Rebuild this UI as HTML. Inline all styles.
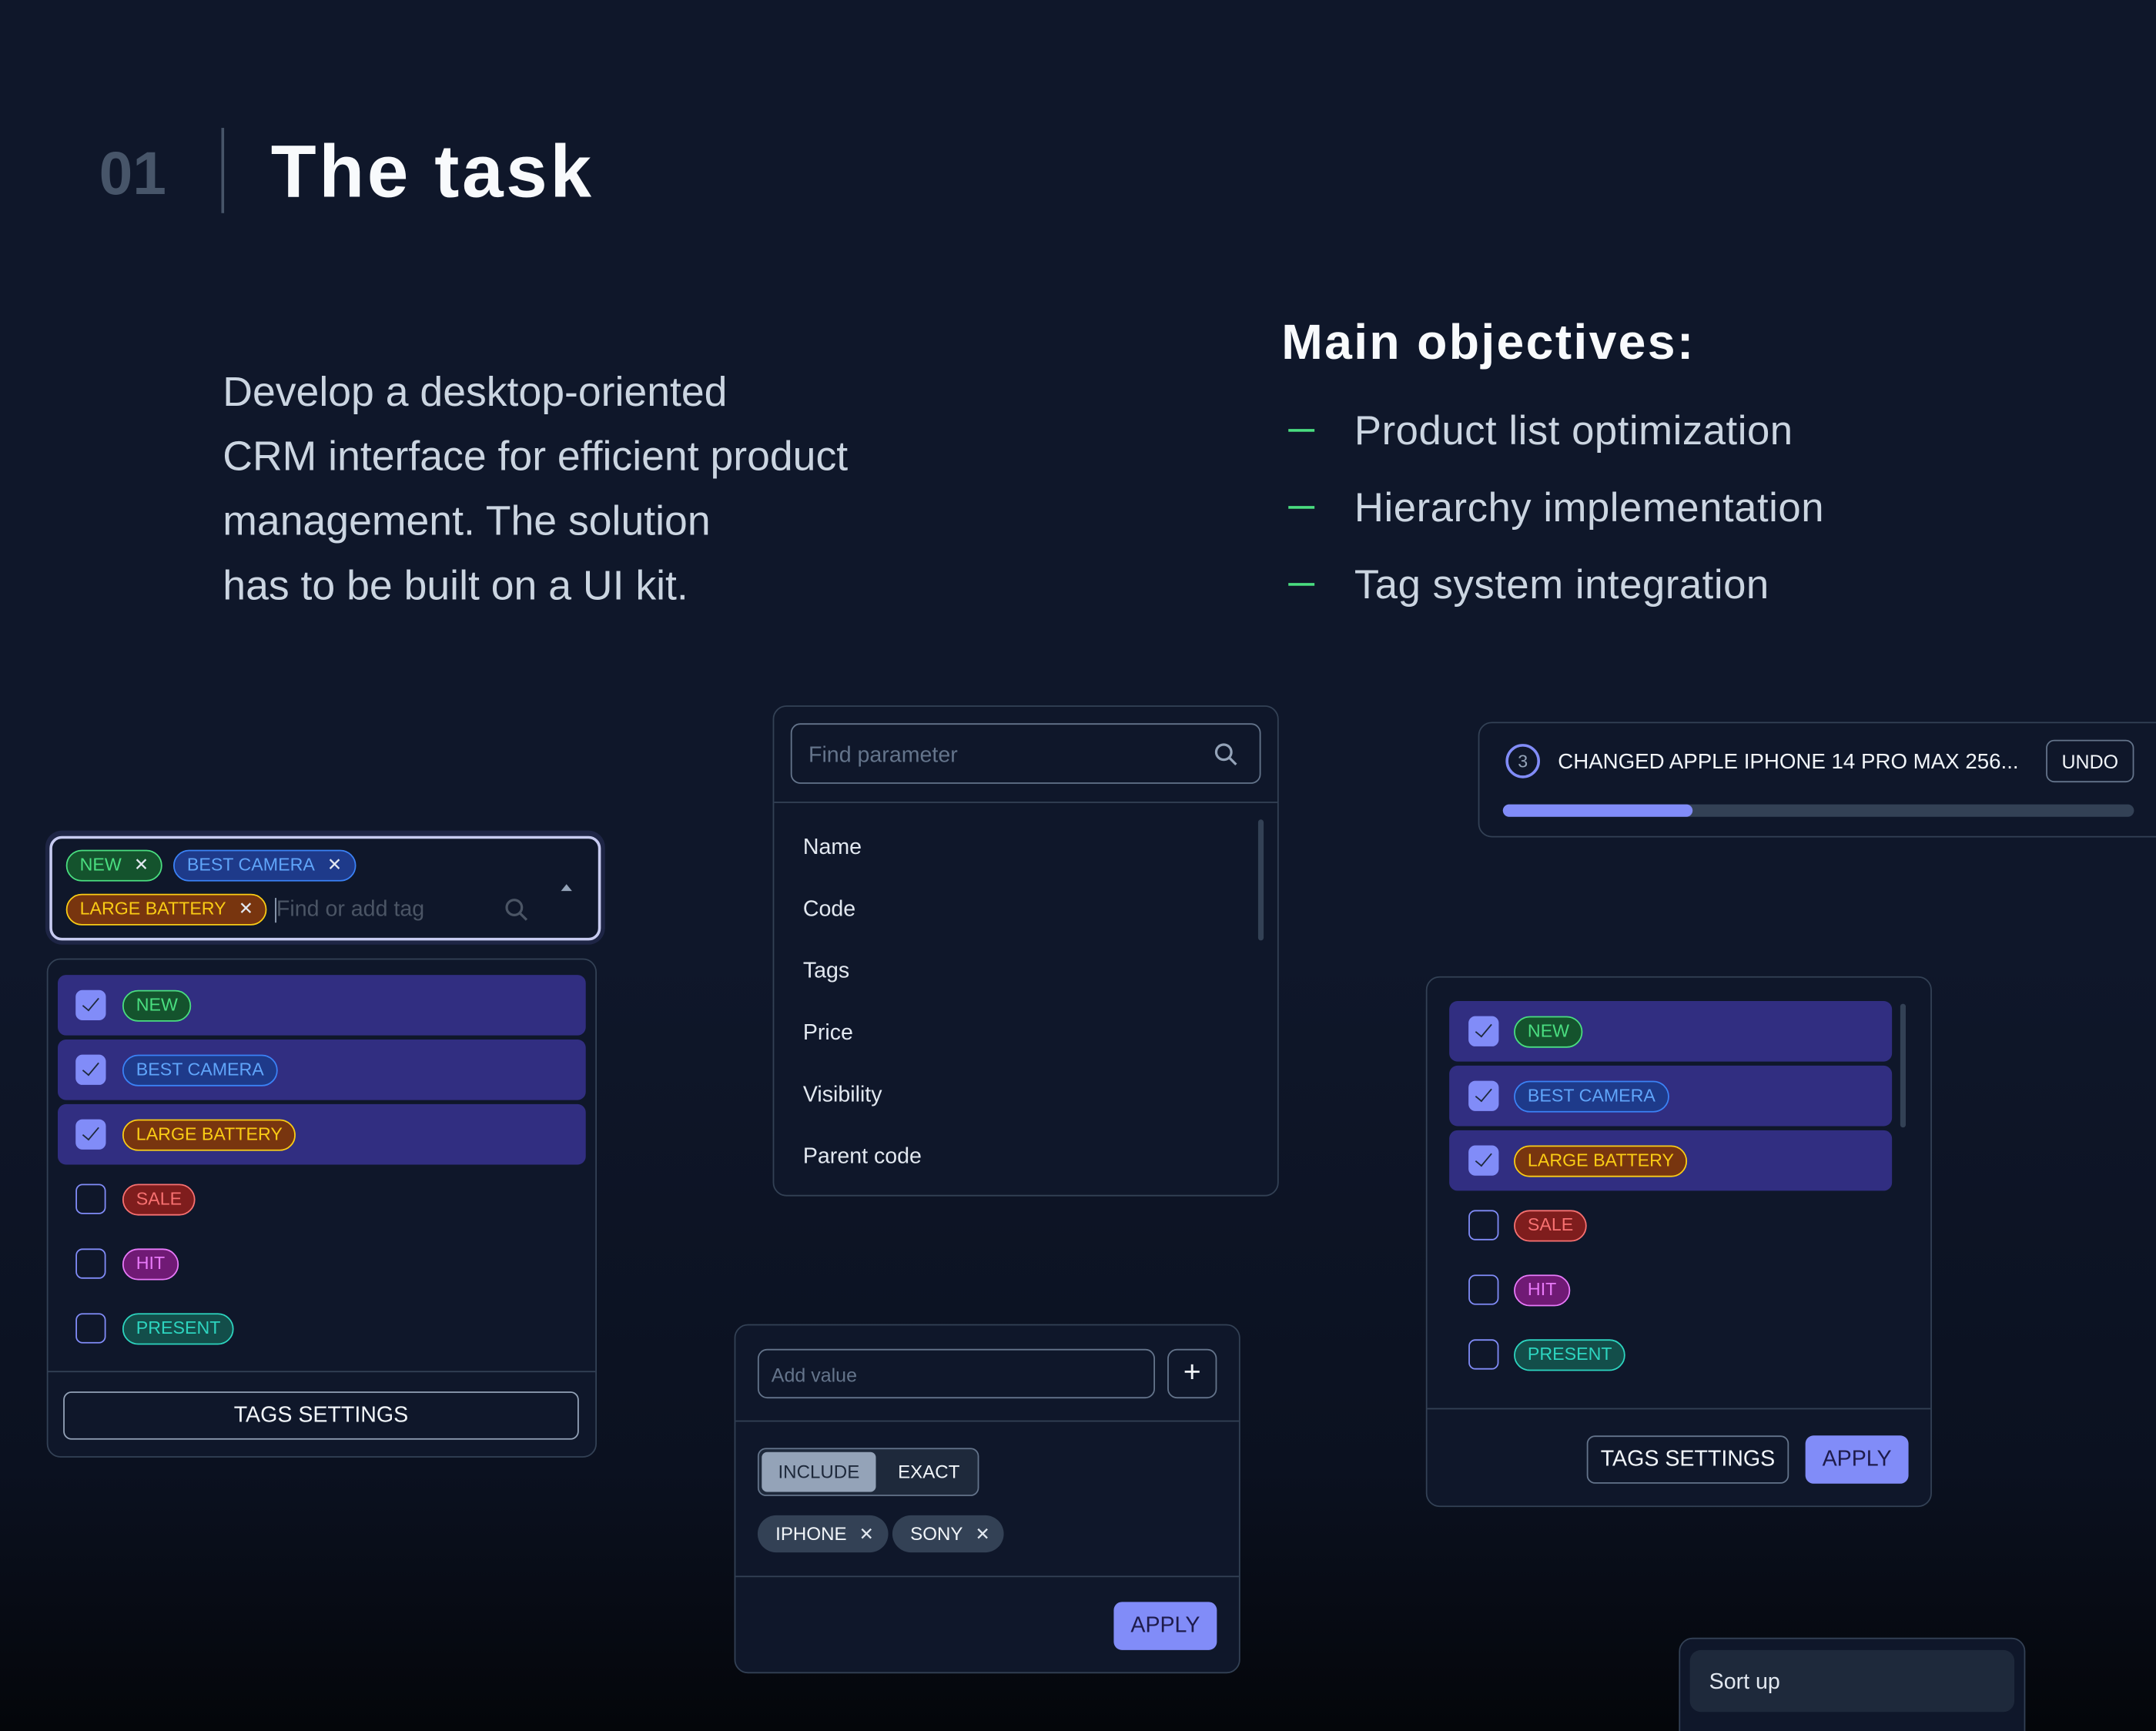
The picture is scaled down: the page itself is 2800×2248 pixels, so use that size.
<!DOCTYPE html>
<html><head><meta charset="utf-8">
<style>
*{margin:0;padding:0;box-sizing:border-box}
html{width:2800px;height:2248px;overflow:hidden;background:linear-gradient(180deg,#0f172a 0%,#0f172a 55%,#0b1120 85%,#04060a 100%)}
body{width:2800px;height:2248px;overflow:hidden;position:relative}
#s{position:absolute;left:0;top:0;width:1568px;height:1259px;overflow:hidden;transform:scale(1.785714);transform-origin:0 0;font-family:"Liberation Sans",sans-serif;color:#e2e8f0}
.a{position:absolute}
.panel{position:absolute;background:#0f172a;border:1px solid #334155;border-radius:10px}
.chip{position:absolute;height:23px;line-height:20px;border:1.5px solid;border-radius:12px;padding:0 9px;font-size:13px;white-space:nowrap}
.g{background:#14532d;border-color:#4ade80;color:#4ade80}
.b{background:#1e3a8a;border-color:#3b82f6;color:#60a5fa}
.y{background:#78350f;border-color:#facc15;color:#facc15}
.r{background:#7f1d1d;border-color:#f87171;color:#f87171}
.m{background:#701a75;border-color:#e879f9;color:#e879f9}
.t{background:#134e4a;border-color:#2dd4bf;color:#2dd4bf}
.sel{position:absolute;background:#312e81;border-radius:6px;height:44px}
.cb{position:absolute;width:22px;height:22px;border-radius:5px;border:1.5px solid #818cf8}
.cb.on{background:#818cf8}
.cb.on:after{content:"";position:absolute;left:7px;top:2px;width:5px;height:11px;border:solid #1e293b;border-width:0 1.6px 1.6px 0;transform:rotate(40deg)}
.x{margin-left:9px;font-size:13px;color:#e2e8f0}
.btn{position:absolute;border:1px solid #64748b;border-radius:6px;text-align:center;font-size:16px;color:#f1f5f9}
.pri{position:absolute;background:#818cf8;border-radius:6px;text-align:center;font-size:16px;color:#1e1b4b}
.hr{position:absolute;height:1px;background:#334155}
.item{position:absolute;left:21px;font-size:16px;color:#e2e8f0}
</style></head><body><div id="s">

<div class="a" style="left:72px;top:102px;font-size:44px;font-weight:bold;color:#475569">01</div>
<div class="a" style="left:161px;top:93px;width:2px;height:62px;background:#475569"></div>
<div class="a" style="left:197px;top:94px;font-size:54px;font-weight:bold;color:#f8fafc;letter-spacing:2px">The task</div>

<div class="a" style="left:162px;top:262px;font-size:30px;line-height:47px;color:#cbd5e1">Develop a desktop-oriented<br>CRM interface for efficient product<br>management. The solution<br>has to be built on a UI kit.</div>

<div class="a" style="left:932px;top:228px;font-size:36px;font-weight:bold;color:#f8fafc;letter-spacing:1.3px">Main objectives:</div>
<div class="a" style="left:937px;top:312px;width:19px;height:2px;background:#4ade80"></div>
<div class="a" style="left:937px;top:368px;width:19px;height:2px;background:#4ade80"></div>
<div class="a" style="left:937px;top:424px;width:19px;height:2px;background:#4ade80"></div>
<div class="a" style="left:985px;top:297px;font-size:29.5px;color:#cbd5e1;letter-spacing:0.3px">Product list optimization</div>
<div class="a" style="left:985px;top:353px;font-size:29.5px;color:#cbd5e1;letter-spacing:0.3px">Hierarchy implementation</div>
<div class="a" style="left:985px;top:409px;font-size:29.5px;color:#cbd5e1;letter-spacing:0.3px">Tag system integration</div>

<!-- tag input -->
<div class="a" style="left:33px;top:604px;width:407px;height:83px;border-radius:12px;background:#1e2545"></div>
<div class="a" style="left:36px;top:608px;width:401px;height:76px;border-radius:9px;border:2px solid #c7cbf0;background:#0f172a"></div>
<div class="chip g" style="left:48px;top:618px">NEW<span class="x">✕</span></div>
<div class="chip b" style="left:126px;top:618px">BEST CAMERA<span class="x">✕</span></div>
<div class="chip y" style="left:48px;top:650px">LARGE BATTERY<span class="x">✕</span></div>
<div class="a" style="left:200px;top:653px;width:1px;height:18px;background:#94a3b8"></div>
<div class="a" style="left:201px;top:653px;font-size:16px;color:#4b5565">Find or add tag</div>
<svg class="a" style="left:367px;top:653px" width="18" height="18" viewBox="0 0 18 18"><circle cx="7" cy="7" r="5.5" fill="none" stroke="#4b5565" stroke-width="1.8"/><path d="M11 11l5 5" stroke="#4b5565" stroke-width="1.8"/></svg>
<div class="a" style="left:408px;top:643px;width:0;height:0;border-left:4px solid transparent;border-right:4px solid transparent;border-bottom:5px solid #94a3b8"></div>

<!-- left tag list -->
<div class="panel" style="left:34px;top:697px;width:400px;height:363px"></div>
<div class="sel" style="left:42px;top:709px;width:384px"></div>
<div class="sel" style="left:42px;top:756px;width:384px"></div>
<div class="sel" style="left:42px;top:803px;width:384px"></div>
<div class="cb on" style="left:55px;top:720px"></div><div class="chip g" style="left:89px;top:720px">NEW</div>
<div class="cb on" style="left:55px;top:767px"></div><div class="chip b" style="left:89px;top:767px">BEST CAMERA</div>
<div class="cb on" style="left:55px;top:814px"></div><div class="chip y" style="left:89px;top:814px">LARGE BATTERY</div>
<div class="cb" style="left:55px;top:861px"></div><div class="chip r" style="left:89px;top:861px">SALE</div>
<div class="cb" style="left:55px;top:908px"></div><div class="chip m" style="left:89px;top:908px">HIT</div>
<div class="cb" style="left:55px;top:955px"></div><div class="chip t" style="left:89px;top:955px">PRESENT</div>
<div class="hr" style="left:35px;top:997px;width:398px"></div>
<div class="btn" style="left:46px;top:1012px;width:375px;height:35px;line-height:34px;border-color:#94a3b8">TAGS SETTINGS</div>

<!-- find parameter -->
<div class="panel" style="left:562px;top:513px;width:368px;height:357px">
 <div class="a" style="left:12px;top:12px;width:342px;height:44px;border:1.5px solid #64748b;border-radius:7px"></div>
 <div class="a" style="left:25px;top:27px;font-size:16px;color:#64748b">Find parameter</div>
 <svg class="a" style="left:320px;top:26px" width="18" height="18" viewBox="0 0 18 18"><circle cx="7" cy="7" r="5.5" fill="none" stroke="#94a3b8" stroke-width="1.8"/><path d="M11 11l5 5" stroke="#94a3b8" stroke-width="1.8"/></svg>
 <div class="hr" style="left:0;top:69px;width:366px"></div>
 <div class="a" style="left:352px;top:82px;width:4px;height:88px;border-radius:2px;background:#334155"></div>
 <div class="item" style="top:94px">Name</div>
 <div class="item" style="top:139px">Code</div>
 <div class="item" style="top:184px">Tags</div>
 <div class="item" style="top:229px">Price</div>
 <div class="item" style="top:274px">Visibility</div>
 <div class="item" style="top:319px">Parent code</div>
</div>

<!-- toast -->
<div class="panel" style="left:1075px;top:525px;width:510px;height:84px">
 <div class="a" style="left:19px;top:15px;width:25px;height:25px;border-radius:50%;border:2px solid #818cf8;text-align:center;line-height:21px;font-size:13px;color:#94a3b8">3</div>
 <div class="a" style="left:57px;top:20px;font-size:15.5px;color:#f1f5f9">CHANGED APPLE IPHONE 14 PRO MAX 256...</div>
 <div class="btn" style="left:412px;top:12px;width:64px;height:31px;line-height:30px;font-size:14px">UNDO</div>
 <div class="a" style="left:17px;top:59px;width:459px;height:9px;border-radius:5px;background:#334155"></div>
 <div class="a" style="left:17px;top:59px;width:138px;height:9px;border-radius:5px;background:#818cf8"></div>
</div>

<!-- right tag list -->
<div class="panel" style="left:1037px;top:710px;width:368px;height:386px"></div>
<div class="sel" style="left:1054px;top:728px;width:322px"></div>
<div class="sel" style="left:1054px;top:775px;width:322px"></div>
<div class="sel" style="left:1054px;top:822px;width:322px"></div>
<div class="a" style="left:1382px;top:730px;width:4px;height:90px;border-radius:2px;background:#334155"></div>
<div class="cb on" style="left:1068px;top:739px"></div><div class="chip g" style="left:1101px;top:739px">NEW</div>
<div class="cb on" style="left:1068px;top:786px"></div><div class="chip b" style="left:1101px;top:786px">BEST CAMERA</div>
<div class="cb on" style="left:1068px;top:833px"></div><div class="chip y" style="left:1101px;top:833px">LARGE BATTERY</div>
<div class="cb" style="left:1068px;top:880px"></div><div class="chip r" style="left:1101px;top:880px">SALE</div>
<div class="cb" style="left:1068px;top:927px"></div><div class="chip m" style="left:1101px;top:927px">HIT</div>
<div class="cb" style="left:1068px;top:974px"></div><div class="chip t" style="left:1101px;top:974px">PRESENT</div>
<div class="hr" style="left:1038px;top:1024px;width:366px"></div>
<div class="btn" style="left:1154px;top:1044px;width:147px;height:35px;line-height:34px">TAGS SETTINGS</div>
<div class="pri" style="left:1313px;top:1044px;width:75px;height:35px;line-height:35px">APPLY</div>

<!-- add value -->
<div class="panel" style="left:534px;top:963px;width:368px;height:254px">
 <div class="a" style="left:16px;top:17px;width:289px;height:36px;border:1.5px solid #64748b;border-radius:7px"></div>
 <div class="a" style="left:26px;top:28px;font-size:14px;color:#64748b">Add value</div>
 <div class="a" style="left:314px;top:17px;width:36px;height:36px;border:1.5px solid #64748b;border-radius:7px;text-align:center;line-height:32px;font-size:22px;color:#f1f5f9">+</div>
 <div class="hr" style="left:0;top:69px;width:366px"></div>
 <div class="a" style="left:16px;top:89px;width:161px;height:35px;border:1.5px solid #64748b;border-radius:6px;background:#1e293b"></div>
 <div class="a" style="left:19px;top:92px;width:83px;height:29px;border-radius:4px;background:#94a3b8;text-align:center;line-height:29px;font-size:13.5px;color:#1e293b">INCLUDE</div>
 <div class="a" style="left:118px;top:99px;font-size:13.5px;color:#f1f5f9">EXACT</div>
 <div class="a" style="left:16px;top:138px;height:27px;line-height:27px;padding:0 10px 0 13px;border-radius:14px;background:#334155;font-size:13.5px;color:#f1f5f9">IPHONE<span class="x">✕</span></div>
 <div class="a" style="left:114px;top:138px;height:27px;line-height:27px;padding:0 10px 0 13px;border-radius:14px;background:#334155;font-size:13.5px;color:#f1f5f9">SONY<span class="x">✕</span></div>
 <div class="hr" style="left:0;top:182px;width:366px"></div>
 <div class="pri" style="left:275px;top:201px;width:75px;height:35px;line-height:35px">APPLY</div>
</div>

<!-- sort -->
<div class="panel" style="left:1221px;top:1191px;width:252px;height:90px">
 <div class="a" style="left:7px;top:8px;width:236px;height:45px;border-radius:8px;background:#1e293b"></div>
 <div class="a" style="left:21px;top:23px;font-size:16px;color:#e2e8f0">Sort up</div>
</div>

</div></body></html>
